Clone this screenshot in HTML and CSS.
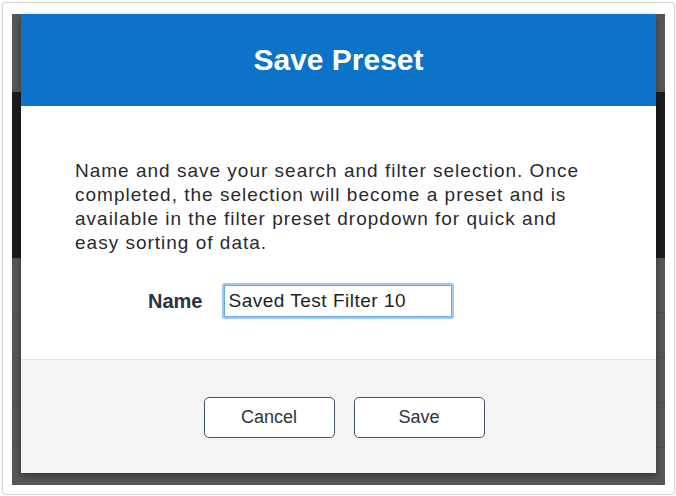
FILE: index.html
```html
<!DOCTYPE html>
<html lang="en">
<head>
<meta charset="utf-8">
<title>Save Preset</title>
<link rel="stylesheet" href="styles.css">
</head>
<body>
<div class="window">
  <div class="backdrop">
    <div class="modal">
      <div class="modal-header">
        <h1 class="modal-title">Save Preset</h1>
      </div>
      <div class="modal-body">
        <p class="intro">Name and save your search and filter selection. Once completed, the selection will become a preset and is available in the filter preset dropdown for quick and easy sorting of data.</p>
        <div class="field">
          <label class="field-label" for="preset-name">Name</label>
          <input class="field-input" id="preset-name" type="text" value="Saved Test Filter 10">
        </div>
      </div>
      <div class="modal-footer">
        <button class="btn" type="button">Cancel</button>
        <button class="btn" type="button">Save</button>
      </div>
    </div>
  </div>
</div>
</body>
</html>
```
FILE: styles.css
```css
* { box-sizing: border-box; }

html, body {
  margin: 0;
  padding: 0;
  background: #ffffff;
  font-family: "Liberation Sans", Arial, sans-serif;
}

.window {
  width: 673px;
  height: 493px;
  margin: 2px 0 0 2px;
  border: 1px solid #d7d7d7;
  border-radius: 4px;
  box-shadow: 0 0 2px rgba(0, 0, 0, 0.12);
  padding: 11px 0 0 9px;
  background: #ffffff;
}

.backdrop {
  width: 653px;
  height: 471px;
  background:
    linear-gradient(to bottom,
      transparent 0 298px, #505050 298px 299px,
      transparent 299px 343px, #505050 343px 344px,
      transparent 344px 388px, #505050 388px 389px,
      transparent 389px 433px, #505050 433px 434px,
      transparent 434px),
    linear-gradient(to bottom, #575757 0 78px, #1b1c20 78px 244px, #575757 244px);
  padding-left: 9px;
}

.modal {
  width: 635px;
  height: 459px;
  display: flex;
  flex-direction: column;
  background: #ffffff;
  box-shadow: 0 3px 7px rgba(0, 0, 0, 0.4);
}

.modal-header {
  height: 92px;
  flex: 0 0 auto;
  background: #0b74c8;
  display: flex;
  align-items: center;
  justify-content: center;
}

.modal-title {
  margin: 0;
  color: #ffffff;
  font-size: 30px;
  font-weight: bold;
  line-height: 1;
}

.modal-body {
  flex: 1 1 auto;
  padding: 53px 54px 0 54px;
}

.intro {
  margin: 0;
  font-size: 19px;
  line-height: 24px;
  letter-spacing: 1px;
  color: #2a2a2e;
}

.field {
  display: flex;
  align-items: center;
  gap: 22px;
  margin: 30px 0 0 73px;
}

.field-label {
  font-size: 20px;
  font-weight: bold;
  color: #2b3244;
}

.field-input {
  width: 228px;
  height: 32px;
  padding: 0 3px;
  border: 1px solid #6aa6ec;
  border-radius: 1px;
  box-shadow: 0 0 0 2px rgba(96, 160, 240, 0.6);
  font-family: "Liberation Sans", Arial, sans-serif;
  font-size: 19px;
  letter-spacing: 0.5px;
  color: #1e1e22;
  background: #ffffff;
  outline: none;
}

.modal-footer {
  flex: 0 0 114px;
  background: #f4f4f4;
  border-top: 1px solid #e4e4e4;
  display: flex;
  justify-content: center;
  align-items: flex-start;
  gap: 19px;
  padding: 37px 0 0 11px;
}

.btn {
  width: 131px;
  height: 41px;
  background: #ffffff;
  border: 1.5px solid #45536b;
  border-radius: 5px;
  font-family: "Liberation Sans", Arial, sans-serif;
  font-size: 18px;
  color: #2e3340;
  padding: 0;
}
```
